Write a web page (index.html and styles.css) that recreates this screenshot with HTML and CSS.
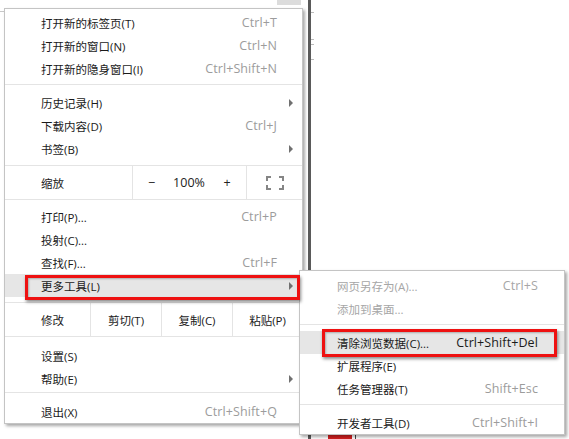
FILE: index.html
```html
<!DOCTYPE html>
<html lang="zh-CN">
<head>
<meta charset="utf-8">
<title>Menu</title>
<link rel="stylesheet" href="styles.css">
</head>
<body>
<div class="page">
  <div class="left-pane">
    <div class="topbar"><span class="tbtn"></span></div>
    <div class="hline"></div>
  </div>
  <div class="right-pane">
    <div class="ticks"><i></i><i></i><i></i><i></i></div>
    <div class="bottom-row"><span class="redbtn"></span><span class="dline"></span></div>
  </div>
</div>

<div class="menu main-menu">
  <div class="item"><span class="label">打开新的标签页(T)</span><span class="key">Ctrl+T</span><span class="arr"></span></div>
  <div class="item"><span class="label">打开新的窗口(N)</span><span class="key">Ctrl+N</span><span class="arr"></span></div>
  <div class="item"><span class="label">打开新的隐身窗口(I)</span><span class="key">Ctrl+Shift+N</span><span class="arr"></span></div>
  <div class="sep"></div>
  <div class="item"><span class="label">历史记录(H)</span><span class="key"></span><span class="arr"><b class="tri"></b></span></div>
  <div class="item"><span class="label">下载内容(D)</span><span class="key">Ctrl+J</span><span class="arr"></span></div>
  <div class="item"><span class="label">书签(B)</span><span class="key"></span><span class="arr"><b class="tri"></b></span></div>
  <div class="zoom-row">
    <div class="cell cell-label">缩放</div>
    <div class="cell zoom-ctrl"><span>−</span><span>100%</span><span>+</span></div>
    <div class="cell cell-icon">
      <svg width="18" height="14" viewBox="0 0 18 14"><path d="M1 5V1H5M13 1H17V5M17 9V13H13M5 13H1V9" fill="none" stroke="#858585" stroke-width="2"/></svg>
    </div>
  </div>
  <div class="group-gap"></div>
  <div class="item"><span class="label">打印(P)...</span><span class="key">Ctrl+P</span><span class="arr"></span></div>
  <div class="item"><span class="label">投射(C)...</span><span class="key"></span><span class="arr"></span></div>
  <div class="item"><span class="label">查找(F)...</span><span class="key">Ctrl+F</span><span class="arr"></span></div>
  <div class="item hover"><span class="label">更多工具(L)</span><span class="key"></span><span class="arr"><b class="tri"></b></span></div>
  <div class="edit-row">
    <div class="cell cell-label">修改</div>
    <div class="cell">剪切(T)</div>
    <div class="cell">复制(C)</div>
    <div class="cell">粘贴(P)</div>
  </div>
  <div class="group-gap2"></div>
  <div class="item"><span class="label">设置(S)</span><span class="key"></span><span class="arr"></span></div>
  <div class="item"><span class="label">帮助(E)</span><span class="key"></span><span class="arr"><b class="tri"></b></span></div>
  <div class="sep sep-last"></div>
  <div class="item"><span class="label">退出(X)</span><span class="key">Ctrl+Shift+Q</span><span class="arr"></span></div>
</div>

<div class="menu sub-menu">
  <div class="item disabled"><span class="label">网页另存为(A)...</span><span class="key">Ctrl+S</span><span class="arr"></span></div>
  <div class="item disabled"><span class="label">添加到桌面...</span><span class="key"></span><span class="arr"></span></div>
  <div class="sep"></div>
  <div class="item hover"><span class="label">清除浏览数据(C)...</span><span class="key dark">Ctrl+Shift+Del</span><span class="arr"></span></div>
  <div class="item"><span class="label">扩展程序(E)</span><span class="key"></span><span class="arr"></span></div>
  <div class="item"><span class="label">任务管理器(T)</span><span class="key">Shift+Esc</span><span class="arr"></span></div>
  <div class="sep"></div>
  <div class="item"><span class="label">开发者工具(D)</span><span class="key">Ctrl+Shift+I</span><span class="arr"></span></div>
</div>

<div class="mark mark-main"></div>
<div class="mark mark-sub"></div>
</body>
</html>
```
FILE: styles.css
```css
html, body {
  margin: 0;
  padding: 0;
  background: #ffffff;
}
body {
  width: 569px;
  height: 439px;
  overflow: hidden;
  position: relative;
  font-family: "Open Sans", "Noto Sans CJK SC", sans-serif;
  font-size: 11.5px;
  color: #1a1a1a;
}

/* background page */
.page {
  display: flex;
  height: 439px;
}
.left-pane {
  width: 308px;
  display: flex;
  flex-direction: column;
}
.topbar {
  height: 11px;
  display: flex;
  justify-content: flex-end;
  padding-right: 7px;
}
.tbtn {
  width: 24px;
  height: 5px;
  background: #dcdcdc;
}
.hline {
  width: 4px;
  height: 1px;
  background: #c8c8c8;
}
.right-pane {
  flex: 1;
  border-left: 3px solid #5a5a5a;
  display: flex;
  flex-direction: column;
  justify-content: space-between;
}
.ticks {
  display: flex;
  flex-direction: column;
  padding-top: 12px;
}
.ticks i {
  display: block;
  width: 3px;
  height: 1px;
  background: #bbbbbb;
  margin-bottom: 26px;
}
.ticks i:nth-child(2) { margin-bottom: 4px; }
.ticks i:nth-child(3) { margin-bottom: 14px; }
.bottom-row {
  display: flex;
  height: 4px;
  padding-left: 17px;
  gap: 3px;
}
.redbtn {
  width: 24px;
  height: 4px;
  background: #d42020;
}
.dline {
  width: 1px;
  background: #444;
}

/* menus */
.menu {
  position: absolute;
  box-sizing: border-box;
  background: #ffffff;
  border: 1px solid #c4c4c4;
  box-shadow: 2px 2px 3px rgba(0, 0, 0, 0.35);
}
.main-menu {
  left: 4px;
  top: 8px;
  width: 299px;
  height: 416px;
  padding-top: 2px;
}
.sub-menu {
  left: 299px;
  top: 270px;
  width: 266px;
  height: 165px;
  padding-top: 3px;
}
.item {
  display: flex;
  align-items: center;
  height: 23px;
  padding: 0 9px 0 36px;
  white-space: nowrap;
}
.sub-menu .item {
  padding: 0 10px 0 37px;
}
.item .label {
  flex: 1;
}
.item .key {
  color: #9c9c9c;
  font-size: 12.5px;
  letter-spacing: 0.1px;
}
.item .key.dark {
  color: #1a1a1a;
}
.item .arr {
  width: 16px;
  display: flex;
  justify-content: flex-end;
}
.tri {
  display: block;
  width: 0;
  height: 0;
  border-left: 4px solid #707070;
  border-top: 4px solid transparent;
  border-bottom: 4px solid transparent;
}
.item.hover {
  background: #e6e6e6;
}
.item.disabled .label,
.item.disabled .key {
  color: #a6a6a6;
}
.sep {
  height: 1px;
  background: #e4e4e4;
  margin: 4px 0 6px;
}
.sep-last {
  margin: 2px 0 7px;
}

.zoom-row,
.edit-row {
  display: grid;
  height: 35px;
  box-sizing: border-box;
  border-top: 1px solid #e4e4e4;
  border-bottom: 1px solid #e4e4e4;
  margin-top: 5px;
}
.zoom-row {
  grid-template-columns: 127px 114px 1fr;
}
.edit-row {
  grid-template-columns: 85px 71px 71px 1fr;
}
.cell {
  display: flex;
  align-items: center;
  justify-content: center;
  border-left: 1px solid #e4e4e4;
}
.cell.cell-label {
  border-left: none;
  justify-content: flex-start;
  padding-left: 36px;
}
.zoom-ctrl {
  display: grid;
  grid-template-columns: 37px 38px 1fr;
  justify-items: center;
  align-items: center;
  color: #222;
  font-size: 12.5px;
}
.cell-icon svg {
  display: block;
}
.group-gap {
  height: 5px;
}
.group-gap2 {
  height: 7px;
}

/* annotation boxes */
.mark {
  position: absolute;
  box-sizing: border-box;
  border: 3px solid #ee1111;
  box-shadow: 1px 2px 3px rgba(0, 0, 0, 0.45), inset 1px 1px 2px rgba(0, 0, 0, 0.25);
}
.mark-main {
  left: 25px;
  top: 275px;
  width: 275px;
  height: 25px;
}
.mark-sub {
  left: 322px;
  top: 329px;
  width: 235px;
  height: 28px;
}
```
